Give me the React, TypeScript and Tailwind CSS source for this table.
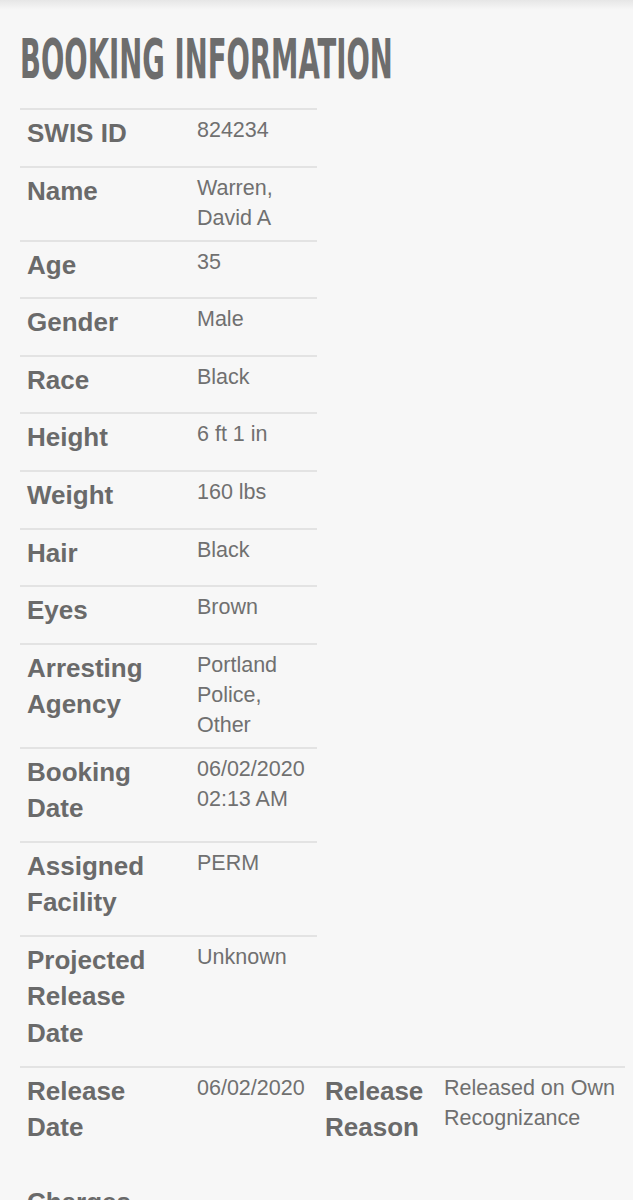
import React from "react";

const rows: { label: string[]; value: string[] }[] = [
  { label: ["SWIS ID"], value: ["824234"] },
  { label: ["Name"], value: ["Warren,", "David A"] },
  { label: ["Age"], value: ["35"] },
  { label: ["Gender"], value: ["Male"] },
  { label: ["Race"], value: ["Black"] },
  { label: ["Height"], value: ["6 ft 1 in"] },
  { label: ["Weight"], value: ["160 lbs"] },
  { label: ["Hair"], value: ["Black"] },
  { label: ["Eyes"], value: ["Brown"] },
  { label: ["Arresting", "Agency"], value: ["Portland", "Police,", "Other"] },
  { label: ["Booking", "Date"], value: ["06/02/2020", "02:13 AM"] },
  { label: ["Assigned", "Facility"], value: ["PERM"] },
  { label: ["Projected", "Release", "Date"], value: ["Unknown"] },
];

function Label({ lines }: { lines: string[] }) {
  return (
    <div className="pl-[7px] pt-[5px] pb-[14.1px] text-[26px] leading-[36.5px] font-bold text-[#6a6a6a]">
      {lines.map((l, i) => (
        <div key={i}>{l}</div>
      ))}
    </div>
  );
}

function Value({ lines }: { lines: string[] }) {
  return (
    <div className="pl-[7px] pt-[5px] pb-[7px] text-[21.5px] leading-[30px] text-[#707070]">
      {lines.map((l, i) => (
        <div key={i}>{l}</div>
      ))}
    </div>
  );
}

export default function App() {
  return (
    <div
      className="min-h-[1200px] bg-[#f7f7f7] text-[#6b6b6b] relative overflow-hidden"
      style={{ fontFamily: '"Liberation Sans", Arial, sans-serif' }}
    >
      <div className="absolute top-0 left-0 right-0 h-[10px] bg-gradient-to-b from-[#e6e6e6] to-[#f7f7f7]" />
      <div className="px-[20px] pt-[29px]">
        <h1
          className="inline-block origin-left scale-x-[0.556] whitespace-nowrap text-[55px] leading-[60px] font-bold text-[#6d6d6d]"
          style={{ fontFamily: '"DejaVu Sans Condensed", "Liberation Sans", sans-serif' }}
        >
          BOOKING INFORMATION
        </h1>
        <div className="mt-[19px] w-[297px]">
          {rows.map((r, i) => (
            <div key={i} className="grid grid-cols-[170px_127px] border-t-2 border-[#e3e3e3]">
              <Label lines={r.label} />
              <Value lines={r.value} />
            </div>
          ))}
        </div>
        <div className="w-[605px] grid grid-cols-[170px_128px_119px_188px] border-t-2 border-[#e3e3e3]">
          <Label lines={["Release", "Date"]} />
          <Value lines={["06/02/2020"]} />
          <Label lines={["Release", "Reason"]} />
          <div className="pl-[7px] pt-[5px] pb-[7px] text-[21.5px] leading-[30px] text-[#707070]">
            Released on Own Recognizance
          </div>
        </div>
        <div className="mt-[24px] pl-[7px] text-[26px] leading-[36px] font-bold text-[#6a6a6a]">Charges</div>
      </div>
    </div>
  );
}
